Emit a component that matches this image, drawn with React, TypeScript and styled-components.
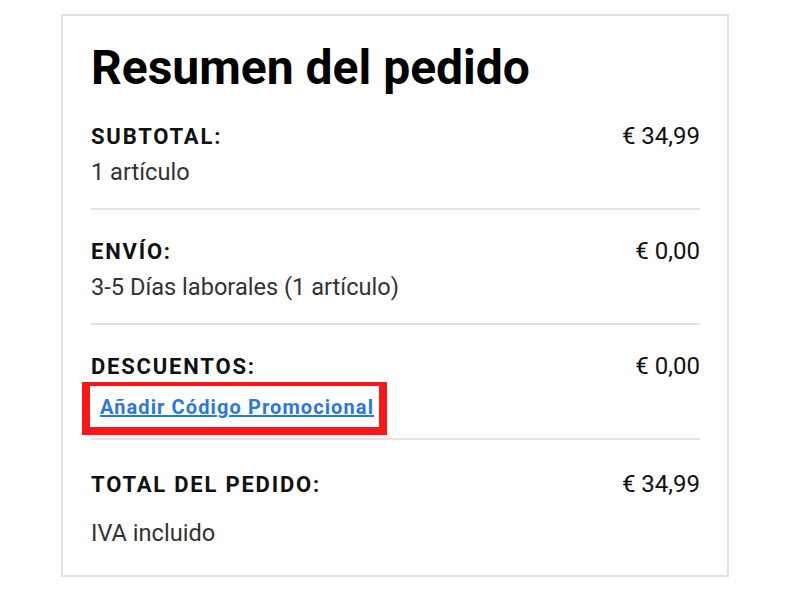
import React from 'react';
import styled, { createGlobalStyle } from 'styled-components';

const GlobalStyle = createGlobalStyle`
    body {
        margin: 0;
        background: #fff;
        font-family: Roboto, "Liberation Sans", Arial, sans-serif;
        color: #1a1a1a;
    }
`;

const Page = styled.div`
    width: 800px;
    height: 600px;
    padding: 14px 0 0 61px;
    box-sizing: border-box;
`;

const Card = styled.div`
    width: 668px;
    height: 563px;
    box-sizing: border-box;
    border: 2px solid #e2e2e2;
    padding: 0 27px 0 28px;
`;

const Title = styled.h1`
    margin: 0;
    padding-top: 24px;
    height: 55px;
    font-size: 48px;
    line-height: 56px;
    font-weight: 700;
    color: #000;
`;

const Section = styled.div<{ last?: boolean }>`
    padding: ${p => (p.last ? '26px' : '23px')} 0 18px 0;
    border-bottom: ${p => (p.last ? 'none' : '2px solid #e4e4e4')};
`;

const Row = styled.div`
    display: flex;
    justify-content: space-between;
    align-items: center;
    height: 36px;
`;

const Label = styled.span`
    font-size: 22px;
    font-weight: 700;
    letter-spacing: 1.8px;
    color: #111;
`;

const Value = styled.span`
    font-size: 24px;
    color: #111;
`;

const Sub = styled.div<{ spaced?: boolean }>`
    font-size: 23.6px;
    line-height: 36px;
    color: #333;
    margin-top: ${p => (p.spaced ? '13px' : '0')};
`;

const Highlight = styled.div`
    display: inline-flex;
    align-items: center;
    box-sizing: border-box;
    margin: -2px 0 -15px -9px;
    height: 53px;
    padding: 0 5px 0 10px;
    border: 8px solid #fe1616;
    border-top-width: 4px;
`;

const PromoLink = styled.a`
    font-size: 20px;
    font-weight: 700;
    letter-spacing: 1.1px;
    color: #2a78df;
    text-decoration: underline;
    cursor: pointer;
`;

const lines = [
    { label: 'SUBTOTAL:', value: '€ 34,99', sub: '1 artículo' },
    { label: 'ENVÍO:', value: '€ 0,00', sub: '3-5 Días laborales (1 artículo)' },
];

const App = () => {
    return (
        <Page>
            <GlobalStyle />
            <Card>
                <Title>Resumen del pedido</Title>
                {lines.map(l => (
                    <Section key={l.label}>
                        <Row>
                            <Label>{l.label}</Label>
                            <Value>{l.value}</Value>
                        </Row>
                        <Sub>{l.sub}</Sub>
                    </Section>
                ))}
                <Section>
                    <Row>
                        <Label>DESCUENTOS:</Label>
                        <Value>€ 0,00</Value>
                    </Row>
                    <Highlight>
                        <PromoLink>Añadir Código Promocional</PromoLink>
                    </Highlight>
                </Section>
                <Section last>
                    <Row>
                        <Label>TOTAL DEL PEDIDO:</Label>
                        <Value>€ 34,99</Value>
                    </Row>
                    <Sub spaced>IVA incluido</Sub>
                </Section>
            </Card>
        </Page>
    );
};

export default App;
